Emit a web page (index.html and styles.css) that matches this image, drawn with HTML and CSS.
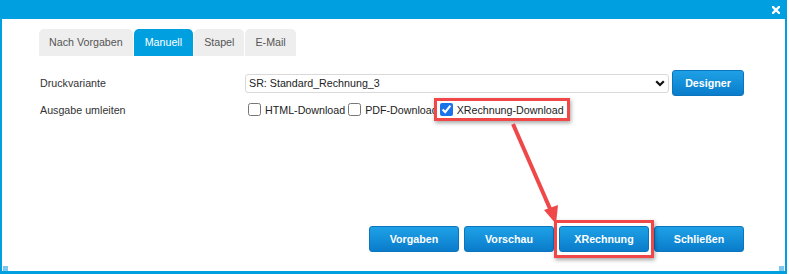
FILE: index.html
```html
<!DOCTYPE html>
<html lang="de">
  <head>
    <meta charset="UTF-8" />
    <meta name="viewport" content="width=device-width, initial-scale=1.0" />
    <title>Drucken</title>
    <link rel="stylesheet" href="styles.css">
  </head>
  <body>
    <div class="dialog">
      <div class="titlebar">
        <button class="close-button" title="Schließen">
          <svg width="8" height="8" viewBox="0 0 8 8">
            <path d="M1 1 L7 7 M7 1 L1 7" stroke="#fff" stroke-width="2.4" stroke-linecap="square" />
          </svg>
        </button>
      </div>

      <div class="content">
        <ul class="tabs">
          <li class="tab">Nach Vorgaben</li>
          <li class="tab active">Manuell</li>
          <li class="tab">Stapel</li>
          <li class="tab">E-Mail</li>
        </ul>

        <div class="form-row first">
          <label class="row-label" for="druckvariante">Druckvariante</label>
          <div class="row-field">
            <div class="select-wrap">
              <select id="druckvariante" class="select">
                <option>SR: Standard_Rechnung_3</option>
              </select>
              <svg class="chevron" width="10" height="7" viewBox="0 0 10 7">
                <path d="M1.2 1.2 L5 5 L8.8 1.2" fill="none" stroke="#111" stroke-width="2.2" />
              </svg>
            </div>
            <button class="blue-button designer">Designer</button>
          </div>
        </div>

        <div class="form-row second">
          <span class="row-label">Ausgabe umleiten</span>
          <div class="row-field checks">
            <label class="check"><input type="checkbox" /> HTML-Download</label>
            <label class="check"><input type="checkbox" /> PDF-Download</label>
            <span class="highlight check-highlight">
              <label class="check"><input type="checkbox" checked /> XRechnung-Download</label>
            </span>
          </div>
        </div>

        <div class="button-bar">
          <button class="blue-button">Vorgaben</button>
          <button class="blue-button">Vorschau</button>
          <span class="highlight button-highlight">
            <button class="blue-button">XRechnung</button>
          </span>
          <button class="blue-button">Schließen</button>
        </div>
      </div>

      <!-- Pfeil von der Checkbox zum Button -->
      <svg class="arrow" width="789" height="274" viewBox="0 0 789 274">
        <line x1="513" y1="124" x2="551" y2="211" stroke="#f04848" stroke-width="4" />
        <polygon points="556,224 544,210 558,205" fill="#f04848" />
      </svg>

      <span class="grip grip-left"></span>
      <span class="grip grip-right"></span>
    </div>
  </body>
</html>
```

FILE: styles.css
```css
body {
  margin: 0;
  padding: 0;
  background-color: #fff;
  font-family: "Liberation Sans", Arial, sans-serif;
  font-size: 10.7px;
  color: #333;
}

.dialog {
  position: relative;
  width: 787px;
  height: 274px;
  box-sizing: border-box;
  border-left: 2px solid #009fe0;
  border-right: 2px solid #009fe0;
  border-bottom: 3px solid #009fe0;
  display: flex;
  flex-direction: column;
  background-color: #fff;
}

.titlebar {
  height: 19px;
  background-color: #009fe0;
  display: flex;
  justify-content: flex-end;
  align-items: center;
}

.close-button {
  border: none;
  background: none;
  padding: 0;
  margin-right: 5px;
  width: 8px;
  height: 8px;
  display: flex;
}

.content {
  flex: 1;
  display: flex;
  flex-direction: column;
  padding: 10px 41px 19px 38px;
}

.tabs {
  list-style: none;
  margin: 0 0 0 -1px;
  padding: 0;
  display: flex;
  gap: 1px;
}

.tab {
  height: 27px;
  line-height: 27px;
  padding: 0 10px 0 10px;
  background-color: #eeeeee;
  color: #555;
  border-radius: 5px 5px 0 0;
}

.tab.active {
  background-color: #009fe0;
  color: #fff;
  padding: 0 11px;
}

.form-row {
  display: flex;
  align-items: center;
}

.form-row.first {
  margin-top: 14px;
  height: 26px;
}

.form-row.second {
  margin-top: 4px;
  height: 19px;
}

.row-label {
  width: 205px;
  flex: none;
}

.row-field {
  flex: 1;
  display: flex;
  align-items: center;
}

.select-wrap {
  position: relative;
  flex: 1;
  margin-right: 3px;
}

.select {
  appearance: none;
  -webkit-appearance: none;
  display: block;
  width: 100%;
  height: 19px;
  margin: 0;
  padding: 0 0 0 3px;
  border: 1px solid #d9d9d9;
  border-radius: 3px;
  background-color: #fff;
  font-family: inherit;
  font-size: 10.7px;
  color: #222;
}

.chevron {
  position: absolute;
  right: 4px;
  top: 6px;
}

.blue-button {
  height: 26px;
  padding: 0;
  border: 1px solid #0a74bd;
  border-radius: 3px;
  background: linear-gradient(#1ea1e6, #0a7ccb);
  color: #fff;
  font-family: inherit;
  font-size: 10.7px;
  font-weight: bold;
  cursor: pointer;
}

.blue-button.designer {
  width: 72px;
}

.checks {
  color: #222;
}

.check {
  display: inline-flex;
  align-items: center;
  white-space: nowrap;
}

.check input {
  width: 13px;
  height: 13px;
  margin: 0 4px 0 3px;
  accent-color: #1a73e8;
}

.highlight {
  position: relative;
  display: inline-flex;
  align-items: center;
  border: 3px solid #f04848;
  box-shadow: 1px 2px 4px rgba(0, 0, 0, 0.35);
  background-color: #fff;
}

.check-highlight {
  margin: -4px 0 -4px -4px;
  padding: 2px 3px 2px 0;
}

.button-bar {
  margin-top: auto;
  display: flex;
  justify-content: flex-end;
  align-items: center;
  gap: 5px;
  height: 26px;
}

.button-bar .blue-button {
  width: 90px;
}

.button-highlight {
  margin: -6px -5px;
  padding: 3px 2px;
  background: none;
}

.arrow {
  position: absolute;
  left: -2px;
  top: 0;
  pointer-events: none;
}

.grip {
  position: absolute;
  bottom: 0;
  width: 5px;
  height: 5px;
  background-color: #7cc8f0;
}

.grip-left {
  left: 1px;
}

.grip-right {
  right: 1px;
}
```
